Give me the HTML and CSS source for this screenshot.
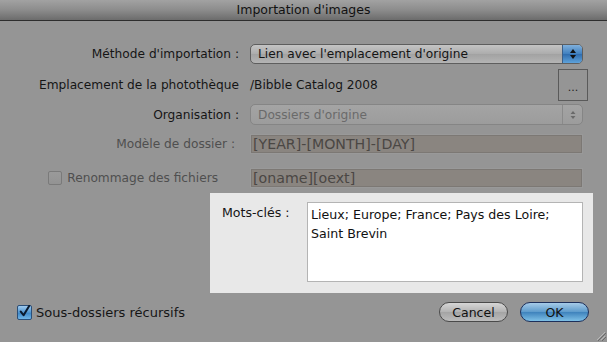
FILE: index.html
```html
<!DOCTYPE html>
<html lang="fr">
<head>
<meta charset="utf-8">
<title>Importation d'images</title>
<link rel="stylesheet" href="styles.css">
</head>
<body>
<div class="dialog">
  <div class="titlebar">Importation d'images</div>

  <div class="row row-method">
    <div class="label">Méthode d'importation :</div>
    <div class="popup">
      <span class="popup-text">Lien avec l'emplacement d'origine</span>
      <span class="stepper">
        <svg width="8" height="12" viewBox="0 0 8 12"><path d="M4 1 L7 5 L1 5 Z M4 11 L7 7 L1 7 Z" fill="#111"/></svg>
      </span>
    </div>
  </div>

  <div class="row row-location">
    <div class="label">Emplacement de la photothèque</div>
    <div class="location">
      <span class="path">/Bibble Catalog 2008</span>
      <span class="browse">...</span>
    </div>
  </div>

  <div class="row row-org">
    <div class="label">Organisation :</div>
    <div class="popup disabled">
      <span class="popup-text">Dossiers d'origine</span>
      <span class="stepper">
        <svg width="8" height="12" viewBox="0 0 8 12"><path d="M4 2 L6.5 5 L1.5 5 Z M4 10 L6.5 7 L1.5 7 Z" fill="#6a6a6a"/></svg>
      </span>
    </div>
  </div>

  <div class="row row-model">
    <div class="label dim">Modèle de dossier :</div>
    <div class="field">[YEAR]-[MONTH]-[DAY]</div>
  </div>

  <div class="row row-rename">
    <div class="label dim check-label"><span class="checkbox"></span>Renommage des fichiers</div>
    <div class="field">[oname][oext]</div>
  </div>

  <div class="panel">
    <div class="panel-label">Mots-clés :</div>
    <div class="textarea">Lieux; Europe; France; Pays des Loire;<br>Saint Brevin</div>
  </div>

  <div class="footer">
    <div class="recursive">
      <span class="checkbox checked">
        <svg width="14" height="14" viewBox="0 0 14 14"><path d="M3 6.5 L6 10.5 L12 0.5" fill="none" stroke="#0b1a2e" stroke-width="2.2" stroke-linecap="round" stroke-linejoin="round"/></svg>
      </span>
      <span>Sous-dossiers récursifs</span>
    </div>
    <div class="buttons">
      <span class="btn cancel">Cancel</span>
      <span class="btn ok">OK</span>
    </div>
  </div>

  <svg class="grip" width="12" height="12" viewBox="0 0 12 12">
    <path d="M11 3 L3 11 M11 7 L7 11" stroke="#b8b8b8" stroke-width="1"/>
    <path d="M12 4 L4 12 M12 8 L8 12" stroke="#6a6a6a" stroke-width="1"/>
  </svg>
</div>
</body>
</html>
```
FILE: styles.css
```css
* { box-sizing: border-box; }
html, body { margin: 0; padding: 0; }
body {
  width: 607px;
  height: 342px;
  overflow: hidden;
  background: #959595;
  font-family: "DejaVu Sans", sans-serif;
  font-size: 12.2px;
  color: #151515;
}
.dialog {
  position: relative;
  height: 342px;
  display: flex;
  flex-direction: column;
}
.titlebar {
  height: 21px;
  line-height: 20px;
  text-align: center;
  font-size: 12.5px;
  color: #111;
  background: linear-gradient(#a2a2a2, #8c8c8c 50%, #6c6c6c);
  border-bottom: 1px solid #2e2e2e;
}
.row {
  display: grid;
  grid-template-columns: 239px 1fr;
  column-gap: 11px;
  align-items: center;
  padding-right: 24px;
}
.label {
  text-align: right;
  white-space: nowrap;
}
.label.dim { color: #4f4f4f; }
.row-method { margin-top: 23px; height: 20px; }
.row-location { margin-top: 5px; height: 32px; }
.row-org { margin-top: 3px; height: 21px; }
.row-model { margin-top: 9px; height: 20px; }
.row-model .label { padding-right: 4px; }
.row-rename { margin-top: 14px; height: 20px; }

.popup {
  height: 100%;
  display: flex;
  align-items: center;
  border: 1px solid #5e5e5e;
  border-radius: 5px;
  background: linear-gradient(#c4c4c4, #acacac 50%, #a2a2a2 51%, #b4b4b4);
  overflow: hidden;
}
.popup-text {
  flex: 1;
  padding-left: 7px;
  white-space: nowrap;
}
.stepper {
  width: 20px;
  height: 100%;
  display: flex;
  align-items: center;
  justify-content: center;
  background: linear-gradient(#7fb0dc, #3f7fbf 50%, #2f6cae 51%, #5ea2da);
  border-left: 1px solid #3b5f88;
}
.popup.disabled {
  border-color: #858585;
  background: linear-gradient(#a4a4a4, #9c9c9c);
  color: #6a6a6a;
}
.popup.disabled .stepper {
  background: transparent;
  border-left: 1px solid #8a8a8a;
}

.location {
  display: flex;
  align-items: center;
  justify-content: space-between;
  margin-right: -5px;
  height: 100%;
}
.browse {
  width: 30px;
  height: 32px;
  border: 1px solid #5a5a5a;
  display: flex;
  align-items: center;
  justify-content: center;
  padding-top: 4px;
  font-size: 11px;
  color: #222;
}

.field {
  height: 20px;
  display: flex;
  align-items: center;
  padding-left: 2px;
  background: #8a8580;
  border: 1px solid #999;
  box-shadow: inset 0 0 0 1px #7c7874;
  font-size: 14.2px;
  color: #4a4744;
  white-space: nowrap;
}

.check-label {
  display: flex;
  align-items: center;
  justify-content: flex-end;
  padding-right: 21px;
  gap: 5px;
}
.checkbox {
  width: 14px;
  height: 14px;
  border: 1px solid #7a7a7a;
  border-radius: 2px;
  background: linear-gradient(#9a9a9a, #939393);
  display: inline-flex;
  align-items: center;
  justify-content: center;
}

.panel {
  margin-top: 5px;
  margin-left: 210px;
  width: 383px;
  height: 100px;
  background: #e8e8e8;
  display: flex;
  padding: 9px 10px 11px 12px;
  gap: 15px;
  font-size: 12.6px;
}
.panel-label {
  padding-top: 3px;
  width: 70px;
  white-space: nowrap;
}
.textarea {
  flex: 1;
  background: #fff;
  border: 1px solid #b4b4b4;
  padding: 2px 3px;
  line-height: 19px;
  color: #111;
}

.footer {
  margin-top: 9px;
  height: 20px;
  display: flex;
  align-items: center;
  justify-content: space-between;
  padding: 0 18px 0 17px;
}
.recursive {
  display: flex;
  align-items: center;
  gap: 4px;
  font-size: 13px;
}
.checkbox.checked {
  width: 15px;
  height: 15px;
  border-color: #2b4f78;
  background: linear-gradient(#9fcbef, #4f94cf 50%, #3a84c6 51%, #6fb4e6);
}
.buttons {
  display: flex;
  gap: 12px;
}
.btn {
  width: 69px;
  height: 20px;
  border-radius: 10px;
  display: flex;
  align-items: center;
  justify-content: center;
  font-size: 12.5px;
  color: #111;
}
.cancel {
  border: 1px solid #4a4a4a;
  background: linear-gradient(#d6d6d6, #b2b2b2 50%, #a4a4a4 51%, #bcbcbc);
}
.ok {
  border: 1px solid #1d2f5a;
  background: linear-gradient(#a6cbe8, #5c9acb 50%, #3e82bc 51%, #7ec0e6);
}
.grip {
  position: absolute;
  right: 1px;
  bottom: 1px;
}
```
